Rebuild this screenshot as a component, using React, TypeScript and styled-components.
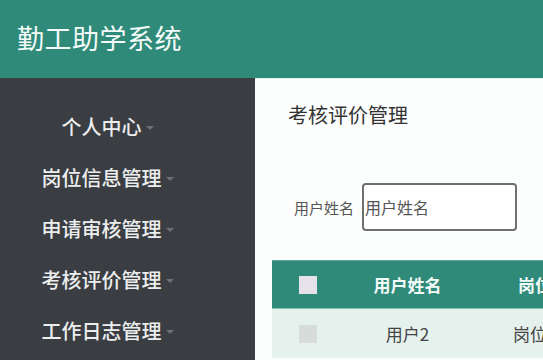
import React from "react";
import styled, { createGlobalStyle } from "styled-components";

const GlobalStyle = createGlobalStyle`
  html, body {
    margin: 0;
    padding: 0;
    overflow: hidden;
    background: #fcfdfd;
  }
  * { box-sizing: border-box; }
  body {
    font-family: "Noto Sans CJK SC", "Noto Sans", sans-serif;
  }
`;

const Page = styled.div`
  width: 543px;
  height: 360px;
  display: flex;
  flex-direction: column;
  overflow: hidden;
`;

const Header = styled.header`
  height: 78px;
  flex: none;
  background: #2f8a79;
  display: flex;
  align-items: center;
  padding-left: 17px;
  padding-bottom: 4px;
`;

const Brand = styled.h1`
  margin: 0;
  font-size: 27px;
  font-weight: 400;
  color: #f4fbf9;
  letter-spacing: 0.5px;
`;

const Body = styled.div`
  flex: 1;
  display: flex;
  min-height: 0;
`;

const Sidebar = styled.nav`
  width: 255px;
  flex: none;
  background: #3a3d42;
  display: flex;
  flex-direction: column;
  align-items: center;
  padding: 23px 40px 0 0;
`;

const NavItem = styled.div`
  height: 51px;
  display: flex;
  align-items: center;
  gap: 4px;
  font-size: 20px;
  font-weight: 500;
  color: #eceeee;
`;

const Caret = styled.span`
  width: 0;
  height: 0;
  border-left: 4px solid transparent;
  border-right: 4px solid transparent;
  border-top: 4px solid #6d7075;
  margin-top: 2px;
`;

const Main = styled.main`
  flex: 1;
  min-width: 0;
  overflow: hidden;
  padding-left: 17px;
  background: #fcfdfd;
  border-top: 1px solid #e3f6f4;
`;

const Title = styled.h2`
  margin: 0;
  padding: 24px 0 0 16px;
  font-size: 20px;
  line-height: 24px;
  font-weight: 400;
  color: #333;
`;

const SearchRow = styled.div`
  margin-top: 56px;
  display: flex;
  align-items: center;
  gap: 8px;
  padding-left: 22px;
`;

const Label = styled.label`
  font-size: 15px;
  color: #555;
  white-space: nowrap;
`;

const Input = styled.input`
  width: 155px;
  height: 48px;
  border: 2px solid #707070;
  border-radius: 4px;
  padding: 0 1px;
  font-family: inherit;
  font-size: 16px;
  color: #333;
  background: #fff;
  outline: none;
  &::placeholder {
    color: #555;
  }
`;

const Table = styled.div`
  margin-top: 29px;
  width: 420px;
  display: grid;
  grid-template-columns: 72px 127px 221px;
`;

const HeadCell = styled.div<{ $align?: string }>`
  height: 49px;
  background: #2f8a79;
  border-top: 1px solid #5aa898;
  border-bottom: 1px solid #7cc4b5;
  display: flex;
  align-items: center;
  justify-content: ${(p) => p.$align || "center"};
  padding-left: ${(p) => (p.$align ? "47px" : "0")};
  font-size: 17px;
  font-weight: 700;
  color: #f2fbf8;
  white-space: nowrap;
`;

const Cell = styled.div<{ $align?: string }>`
  height: 49px;
  background: #e4f1ec;
  display: flex;
  align-items: center;
  justify-content: ${(p) => p.$align || "center"};
  padding-left: ${(p) => (p.$align ? "42px" : "0")};
  font-size: 17px;
  color: #444;
  white-space: nowrap;
`;

const Check = styled.span<{ $head?: boolean }>`
  width: 18px;
  height: 18px;
  background: ${(p) => (p.$head ? "#e6e2ea" : "#d6dcda")};
`;

export default function App() {
  const nav = ["个人中心", "岗位信息管理", "申请审核管理", "考核评价管理", "工作日志管理"];
  return (
    <>
      <GlobalStyle />
      <Page>
        <Header>
          <Brand>勤工助学系统</Brand>
        </Header>
        <Body>
          <Sidebar>
            {nav.map((n) => (
              <NavItem key={n}>
                {n}
                <Caret />
              </NavItem>
            ))}
          </Sidebar>
          <Main>
            <Title>考核评价管理</Title>
            <SearchRow>
              <Label>用户姓名</Label>
              <Input placeholder="用户姓名" />
            </SearchRow>
            <Table>
              <HeadCell>
                <Check $head />
              </HeadCell>
              <HeadCell>用户姓名</HeadCell>
              <HeadCell $align="flex-start">岗位名称</HeadCell>
              <Cell>
                <Check />
              </Cell>
              <Cell>用户2</Cell>
              <Cell $align="flex-start">岗位名称2</Cell>
            </Table>
          </Main>
        </Body>
      </Page>
    </>
  );
}
